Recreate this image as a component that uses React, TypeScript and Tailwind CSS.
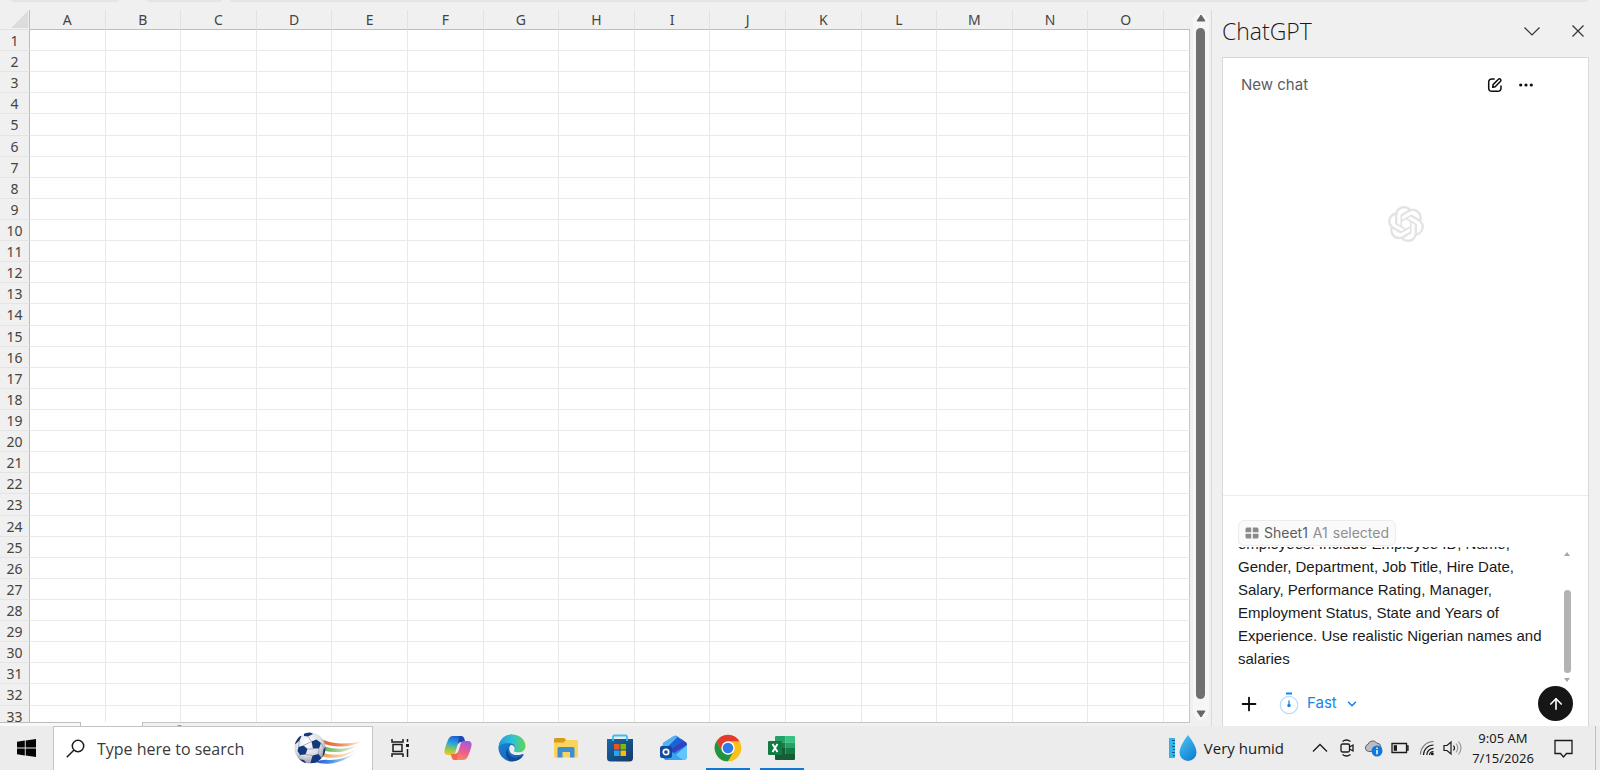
import {useEffect, useRef} from 'react';
import {SiOpenai} from 'react-icons/si';
import {ArrowUp, ChevronDown, Plus} from 'lucide-react';

const COLUMNS = 'ABCDEFGHIJKLMNO'.split('');
const ROWS = Array.from({length: 33}, (_, i) => i + 1);

const PROMPT =
	'employees. Include Employee ID, Name, Gender, Department, Job Title, Hire Date, Salary, Performance Rating, Manager, Employment Status, State and Years of Experience. Use realistic Nigerian names and salaries';

const Sheet = () => (
	<div className="flex-1 min-h-0 overflow-hidden">
		<table className="w-full h-[717px] table-fixed border-separate border-spacing-0 text-sm text-[#444]">
			<colgroup>
				<col className="w-[30px]" />
				{COLUMNS.map((c) => (
					<col key={c} />
				))}
				<col className="w-[26px]" />
			</colgroup>
			<thead>
				<tr className="h-5">
					<th className="h-5 p-0 border-b border-r border-b-[#e2e2e2] border-r-[#bdbdbd]">
						<svg className="ml-[11px] block" width="17" height="17" viewBox="0 0 17 17">
							<path d="M17 0v17H0z" fill="#dcdcdc" />
						</svg>
					</th>
					{COLUMNS.map((c) => (
						<th
							key={c}
							className="h-5 p-0 border-b border-r border-b-[#bdbdbd] border-r-[#e2e2e2] font-normal leading-[19px]"
						>
							{c}
						</th>
					))}
					<th className="h-5 p-0 border-b border-[#bdbdbd]" />
				</tr>
			</thead>
			<tbody>
				{ROWS.map((r) => (
					<tr key={r}>
						<th className="p-0 pt-[2px] border-r border-b border-r-[#bdbdbd] border-b-[#e4e4e4] font-normal leading-[18px]">
							{r}
						</th>
						{COLUMNS.map((c) => (
							<td key={c} className="p-0 bg-white border-r border-b border-[#e9e9e9]" />
						))}
						<td className="p-0 bg-white border-r border-b border-b-[#e9e9e9] border-r-[#c6c6c6]" />
					</tr>
				))}
			</tbody>
		</table>
	</div>
);

const SheetScrollbar = () => (
	<div className="w-[21px] flex flex-col items-center pt-1 pb-[2px]">
		<div className="w-4 flex-1 min-h-0 flex flex-col items-center rounded-lg bg-[#f6f6f6]">
			<svg className="block shrink-0" width="10" height="8" viewBox="0 0 10 8">
				<path d="M5 1l4 6H1z" fill="#666" stroke="#666" strokeLinejoin="round" />
			</svg>
			<div className="mt-[6px] mb-[11px] w-[9px] flex-1 rounded-full bg-[#707070]" />
			<svg className="block shrink-0 mb-[2px]" width="10" height="8" viewBox="0 0 10 8">
				<path d="M5 7l4-6H1z" fill="#666" stroke="#666" strokeLinejoin="round" />
			</svg>
		</div>
	</div>
);

const SheetTabs = () => (
	<div className="h-1 flex">
		<div className="w-[81px] bg-[#f8f8f8] border-t border-r border-[#bdbdbd]" />
		<div className="w-[62px] bg-white border-r border-[#bdbdbd]" />
		<div className="flex-1 mr-[21px] pl-8 bg-[#f1f1f1] border-t border-[#c6c6c6] overflow-hidden">
			<div className="mt-[2px] w-[9px] h-[9px] rounded-full border border-[#777]" />
		</div>
	</div>
);

const Composer = () => {
	const inputRef = useRef<HTMLTextAreaElement>(null);

	useEffect(() => {
		if (inputRef.current) {
			inputRef.current.scrollTop = inputRef.current.scrollHeight;
		}
	}, []);

	return (
		<div className="border-t border-[#ececec] pt-6 pb-[5px] pl-[15px] pr-[15px]">
			<div className="inline-flex h-[26px] items-center gap-[5px] rounded-md border border-[#ececec] bg-[#fafafa] px-[6px] text-sm text-[#8f8f8f] align-top">
				<svg width="14" height="12" viewBox="0 0 14 12" fill="#8a8a8a">
					<path d="M2 .5h4.2v4.8H.5V2A1.5 1.5 0 0 1 2 .5zM7.8.5H12A1.5 1.5 0 0 1 13.500 2v3.300H7.800zM.5 6.700h5.700v4.800H2A1.500 1.500 0 0 1 .5 10zM7.800 6.700h5.700V10A1.500 1.500 0 0 1 12 11.500H7.800z" />
				</svg>
				<span className="text-[#5d5d5d]">Sheet1</span>
				<span>A1</span>
				<span>selected</span>
			</div>
			<div className="mt-px flex h-[139px]">
				<textarea
					ref={inputRef}
					aria-label="Message"
					className="block h-[125px] flex-1 min-w-0 resize-none overflow-hidden bg-transparent pb-[2px] font-['Liberation_Sans',sans-serif] text-[15px] leading-[23px] text-[#1a1a1a] outline-none"
					defaultValue={PROMPT}
				/>
				<div className="w-3 flex flex-col items-center pt-1 pb-[3px]">
					<svg width="8" height="6" viewBox="0 0 8 6">
						<path d="M4 1l3 4H1z" fill="#a6a6a6" />
					</svg>
					<div className="mt-[33px] w-[7px] flex-1 rounded-full bg-[#b3b3b3]" />
					<svg className="mt-1" width="8" height="6" viewBox="0 0 8 6">
						<path d="M4 5l3-4H1z" fill="#a6a6a6" />
					</svg>
				</div>
			</div>
			<div className="flex items-center">
				<button aria-label="Add" className="text-[#0d0d0d]">
					<Plus size={22} strokeWidth={2} />
				</button>
				<button className="ml-[19px] flex items-center text-[15px] text-[#1285ee]">
					<svg width="20" height="24" viewBox="0 0 20 24" fill="none">
						<path d="M7 1.500h6" stroke="#1285ee" strokeWidth="2" />
						<circle cx="10" cy="13" r="8.700" stroke="#b5dcfb" strokeWidth="1.200" />
						<path d="M10 8.500V13" stroke="#1285ee" strokeWidth="1.300" />
						<circle cx="10" cy="13.500" r="1.700" fill="#1285ee" />
					</svg>
					<span className="ml-2">Fast</span>
					<ChevronDown className="ml-2" size={14} strokeWidth={2.6} />
				</button>
				<button
					aria-label="Send"
					className="ml-auto flex h-[35px] w-[35px] items-center justify-center rounded-full bg-[#161616] text-white"
				>
					<ArrowUp size={18} strokeWidth={2.2} />
				</button>
			</div>
		</div>
	);
};

const ChatPane = () => (
	<aside className="w-[388px] shrink-0 flex flex-col pl-[10px] pr-[11px]">
		<header className="h-[47px] flex items-center pb-[6px] pr-[5px]">
			<h1 className="font-['Open_Sans','Noto_Sans',sans-serif] text-[23px] font-light leading-[40px] text-[#1a1a1a]">
				ChatGPT
			</h1>
			<button aria-label="Pane options" className="ml-auto">
				<svg className="block" width="16" height="16" viewBox="0 0 16 16" fill="none" stroke="#333" strokeWidth="1.200">
					<path d="M.5 4.500l7.500 7.500 7.500-7.500" />
				</svg>
			</button>
			<button aria-label="Close pane" className="ml-8">
				<svg className="block" width="12" height="12" viewBox="0 0 12 12" fill="none" stroke="#333" strokeWidth="1.200">
					<path d="M.5.5l11 11M11.500.5l-11 11" />
				</svg>
			</button>
		</header>
		<section className="flex-1 min-h-0 flex flex-col border border-b-0 border-[#d8d8d8] bg-white font-['Inter',sans-serif]">
			<div className="h-[54px] flex items-center pl-[18px] pr-[54px]">
				<h2 className="text-[15px] text-[#5d5d5d]">New chat</h2>
				<button aria-label="New chat" className="ml-auto">
					<svg
						className="block"
						width="16"
						height="16"
						viewBox="0 0 16 16"
						fill="none"
						stroke="#0d0d0d"
						strokeWidth="1.500"
						strokeLinecap="round"
						strokeLinejoin="round"
					>
						<path d="M7.200 2H5Q1.700 2 1.700 5.200V11Q1.700 14.300 5 14.300h5.700q3.300 0 3.300-3.300V9" />
						<path d="M5.700 10.300l.4-2.700 5.300-5.400q1.100-1 2.100 0t0 2.100L8.200 9.800z" />
					</svg>
				</button>
				<button aria-label="More" className="ml-[15px]">
					<svg className="block" width="16" height="16" viewBox="0 0 16 16" fill="#0d0d0d">
						<circle cx="2.700" cy="8" r="1.600" />
						<circle cx="8" cy="8" r="1.600" />
						<circle cx="13.300" cy="8" r="1.600" />
					</svg>
				</button>
			</div>
			<div className="flex-1 flex justify-center pt-[94px]">
				<SiOpenai size={36} className="text-[#e3e3e3]" />
			</div>
			<Composer />
		</section>
	</aside>
);

const WindowsLogo = () => (
	<svg className="block" width="19" height="18" viewBox="0 0 19 18" fill="#050505">
		<path d="M0 2.800L7.800 1.600v7H0zM8.700 1.500L19 0v8.600H8.700zM0 9.400h7.800v7L0 15.200zM8.700 9.400H19V18L8.700 16.500z" />
	</svg>
);

const FootballArt = () => (
	<svg className="block" width="72" height="34" viewBox="0 0 72 34">
		<defs>
			<radialGradient id="ball" cx=".4" cy=".3" r=".75">
				<stop offset="0" stopColor="#fff" />
				<stop offset=".6" stopColor="#dcdde3" />
				<stop offset="1" stopColor="#8e8f9d" />
			</radialGradient>
			<linearGradient id="s1">
				<stop offset="0" stopColor="#e5532a" />
				<stop offset=".5" stopColor="#f08a5a" />
				<stop offset="1" stopColor="#fff" />
			</linearGradient>
			<linearGradient id="s2">
				<stop offset="0" stopColor="#5fae4c" />
				<stop offset="1" stopColor="#fff" />
			</linearGradient>
			<linearGradient id="s3">
				<stop offset="0" stopColor="#f0a04c" />
				<stop offset="1" stopColor="#fff" />
			</linearGradient>
			<linearGradient id="s4">
				<stop offset="0" stopColor="#2452c8" />
				<stop offset=".4" stopColor="#4c93e8" />
				<stop offset="1" stopColor="#fff" />
			</linearGradient>
			<clipPath id="ballClip">
				<circle cx="17" cy="16" r="15.500" />
			</clipPath>
		</defs>
		<path d="M26 6q10 5 22 5.500 12 0 22-2.500-11 5.500-22 5.500-12 0-20-4z" fill="url(#s1)" />
		<path d="M30 14q10 3.500 20 2.500 9-1 16-4-8 5.500-16 7-10 1.500-20-1z" fill="url(#s2)" />
		<path d="M30 21q11 3 20 1 9-2 16-7-7 7-16 9.500-10 2.500-21 0z" fill="url(#s3)" />
		<path d="M22 30q8-3 13-2 15 .5 29-8-13 10-26 11.500-9 1-16-1.500z" fill="url(#s4)" />
		<circle cx="17" cy="16" r="15.500" fill="url(#ball)" />
		<g clipPath="url(#ballClip)" fill="#12397c">
			<path d="M5.500 15l5-1.500 4 3.500-2 5.500-5.500.5-2.500-4z" />
			<path d="M18.500 9.500l5-2 4.500 3.500-2 5.500-6 0z" />
			<path d="M11 1l6-1 3 2-5 2.500-4-.5z" />
			<path d="M19.500 23.500l6-1.500 3 4-5 5h-6z" />
			<path d="M1 9l4-5.500 3.500.5-2 4.500-4.500 4z" />
			<path d="M30.500 17l3-3v8l-4 3z" />
			<path d="M5 27l6 1 3 4-6-1z" />
		</g>
		<g clipPath="url(#ballClip)" fill="none" stroke="#9a9ba8" strokeWidth=".8">
			<path d="M10.500 13.500l8-4M14.500 17h6M12.500 22.500l7 1M6.500 8.500l-1 6.500M26 16.500l-.5 5.500M18.500 9.500L15 4.500M7 23l-2 4M28 11l3 6" />
		</g>
	</svg>
);

const TaskViewIcon = () => (
	<svg className="block" width="18" height="18" viewBox="0 0 18 18" fill="none" stroke="#1a1a1a" strokeWidth="1.500">
		<path d="M1 0v3h11V0M1 18v-3h11v3M2 5.500h9v7H2zM16.500 0v3M16.500 10v8" />
		<path d="M15 5h3v3h-3z" fill="#1a1a1a" stroke="none" />
	</svg>
);

const CopilotIcon = () => (
	<svg width="28" height="28" viewBox="0 0 28 28">
		<defs>
			<linearGradient id="cp1" x1=".5" y1="0" x2=".3" y2="1">
				<stop offset="0" stopColor="#1b5fd0" />
				<stop offset=".4" stopColor="#2aa7dd" />
				<stop offset=".7" stopColor="#8cc653" />
				<stop offset="1" stopColor="#f3c62c" />
			</linearGradient>
			<linearGradient id="cp2" x1=".6" y1="0" x2=".3" y2="1">
				<stop offset="0" stopColor="#a45bd9" />
				<stop offset=".5" stopColor="#ec5a93" />
				<stop offset="1" stopColor="#fb8d55" />
			</linearGradient>
		</defs>
		<path d="M9 2h8q2.500 0 3.200 2.500L21 8h-4q-2.500 0-3.400 3l-2.500 8q-.9 2-3.100 2H4q-4 0-3.500-4.500Q1 13 4 6q1.500-4 5-4z" fill="url(#cp1)" />
		<path d="M15 2h2q2.500 0 3.200 2.500L21 8h-4q-2 0-3 2z" fill="#2345b0" />
		<path d="M19 26h-8q-2.500 0-3.200-2.500L7 20h4q2.500 0 3.400-3l2.500-8q.9-2 3.100-2h4q4 0 3.500 4.500Q27 15 24 22q-1.500 4-5 4z" fill="url(#cp2)" />
		<path d="M13 26h-2q-2.500 0-3.200-2.500L7 20h4q2 0 3-2z" fill="#f4694c" />
	</svg>
);

const EdgeIcon = () => (
	<svg width="28" height="28" viewBox="0 0 28 28">
		<defs>
			<linearGradient id="ed1" x1="0" y1=".4" x2="1" y2=".4">
				<stop offset="0" stopColor="#2298dc" />
				<stop offset=".5" stopColor="#2fc1d8" />
				<stop offset="1" stopColor="#62d64f" />
			</linearGradient>
			<linearGradient id="ed2" x1="0" y1="0" x2=".8" y2="1">
				<stop offset="0" stopColor="#1a86d9" />
				<stop offset="1" stopColor="#1464b8" />
			</linearGradient>
		</defs>
		<path d="M14 .5A13.500 13.500 0 1 0 25.500 21q.5-1.500-1-1-4 1.500-8 .5L20 10 14 .5z" fill="url(#ed2)" />
		<path d="M10 14c-1.500 6 3.500 10.500 9 9.500 2.500-.4 4.500-1.300 6.500-2.500-3 5-8 7-13 6C7.500 25.500 6.500 17.500 10 14z" fill="#134a92" />
		<path d="M.6 13C1.200 5.500 7 .5 14 .5c8 0 13.500 5.500 13.500 11.500 0 4-3 6.500-7 6.500-3.500 0-5-1.300-4-2.700 1.500-2 .7-5.800-3.500-6.300C7 8.600 2 9.500.6 13z" fill="url(#ed1)" />
		<path d="M13 11c3 0 4.500 2.500 3.500 4.800-1 1.400.5 2.700 4 2.700 1.500 0 3-.3 4-1l-1 2.500c-5 2-11 1-12-3.500-.5-1.500-.5-4.500 1.500-5.500z" fill="#ececec" />
	</svg>
);

const FolderIcon = () => (
	<svg width="24" height="28" viewBox="0 0 24 28">
		<path d="M1 4h9.500l1.500 2v4H0V5z" fill="#d99a1b" />
		<path d="M0 8.500h9.500L12 6h11q1 0 1 1v15.500q0 1-1 1H1q-1 0-1-1z" fill="#fbd35f" />
		<path d="M3.500 14.500Q3.500 13 5 13h14q1.500 0 1.500 1.500v9H16V18H8.500v5.500h-5z" fill="#3d8fd0" />
	</svg>
);

const StoreIcon = () => (
	<svg width="28" height="28" viewBox="0 0 28 28">
		<defs>
			<linearGradient id="st" x1="0" y1="0" x2="1" y2="1">
				<stop offset="0" stopColor="#1668ab" />
				<stop offset="1" stopColor="#173863" />
			</linearGradient>
		</defs>
		<path d="M1 5h26v19q0 3.500-3.500 3.500h-19Q1 27.500 1 24z" fill="url(#st)" />
		<path d="M7 7V3q0-1.500 1.500-1.500h11Q21 1.500 21 3v4" fill="none" stroke="#3cbdf0" strokeWidth="1.800" />
		<path d="M8 10h5.500v5.500H8z" fill="#f25022" />
		<path d="M14.500 10H20v5.500h-5.500z" fill="#7fba00" />
		<path d="M8 16.500h5.500V22H8z" fill="#22a6ee" />
		<path d="M14.500 16.500H20V22h-5.500z" fill="#ffb900" />
	</svg>
);

const OutlookIcon = () => (
	<svg width="28" height="28" viewBox="0 0 28 28">
		<path d="M3 9L14 2q1.500-.8 3 0l9 6.500q1 1 1 2.500v11q0 4-4 4H7q-4 0-4-4z" fill="#2b8be8" />
		<path d="M3 9L13 2.500q1.500-1 3.500 0l3 2L5 15l-3-1z" fill="#54b4f2" />
		<path d="M21 5l5 3.500q1 1 1 2.500L12 20l-4-3.500z" fill="#3440bd" />
		<path d="M17.500 3l5.500 4L8 17.500l-3-2z" fill="#1b63d4" />
		<path d="M27 11v11q0 4-4 4H10l9-8q5-4 8-7z" fill="#62c6fb" />
		<path d="M12 18l11 8H8z" fill="#3ba2f0" />
		<rect y="12" width="12" height="12" rx="2" fill="#124a9c" />
		<circle cx="6" cy="18" r="2.700" fill="none" stroke="#fff" strokeWidth="1.700" />
	</svg>
);

const ChromeIcon = () => (
	<svg width="28" height="28" viewBox="0 0 28 28">
		<circle cx="14" cy="14" r="13.300" fill="#fbc116" />
		<path d="M2.480 7.350A13.300 13.300 0 0 1 25.520 7.350H14L8.200 17.300z" fill="#e33b2e" />
		<path d="M2.480 7.350A13.300 13.300 0 0 0 14 27.300L19.800 17.300 8.200 17.300z" fill="#229342" />
		<circle cx="14" cy="14" r="6.700" fill="#fff" />
		<circle cx="14" cy="14" r="5.300" fill="#3079e8" />
	</svg>
);

const ExcelIcon = () => (
	<svg width="28" height="28" viewBox="0 0 28 28">
		<path d="M7 3q0-1 1-1h9.500v6.500H7z" fill="#21a366" />
		<path d="M17.500 2H26q1 0 1 1v5.500h-9.500z" fill="#33c481" />
		<path d="M7 8.500h10.500V14H7z" fill="#128048" />
		<path d="M17.500 8.500H27V14h-9.500z" fill="#21a366" />
		<path d="M7 14h10.500v6H7z" fill="#185c37" />
		<path d="M17.500 14H27v6h-9.500z" fill="#107c41" />
		<path d="M7 20h20v5q0 1-1 1H8q-1 0-1-1z" fill="#185c37" />
		<rect y="7" width="14" height="14" rx="1" fill="#107c41" />
		<path d="M4.500 10l5 8M9.500 10l-5 8" stroke="#fff" strokeWidth="1.900" />
	</svg>
);

const APPS = [
	{name: 'Copilot', Icon: CopilotIcon, open: false},
	{name: 'Edge', Icon: EdgeIcon, open: false},
	{name: 'File Explorer', Icon: FolderIcon, open: false},
	{name: 'Store', Icon: StoreIcon, open: false},
	{name: 'Outlook', Icon: OutlookIcon, open: false},
	{name: 'Chrome', Icon: ChromeIcon, open: true},
	{name: 'Excel', Icon: ExcelIcon, open: true},
];

const HumidityIcon = () => (
	<svg width="28" height="28" viewBox="0 0 28 28">
		<defs>
			<linearGradient id="drop" x1="0" y1="0" x2=".6" y2="1">
				<stop offset="0" stopColor="#4cc8f4" />
				<stop offset="1" stopColor="#1583d4" />
			</linearGradient>
		</defs>
		<path d="M0 4h6v20H0z" fill="#31b4ea" />
		<path d="M6 6.500H3M6 9.500H4M6 12.500H3M6 15.500H4M6 18.500H3M6 21.500H4" stroke="#0c5a94" strokeWidth="1.200" />
		<path d="M19 1q8.500 11 8.500 17.500a8.500 8.500 0 0 1-17 0Q10.500 12 19 1z" fill="url(#drop)" />
	</svg>
);

const TrayIcons = () => (
	<div className="flex items-center">
		<button aria-label="Show hidden icons">
			<svg className="block" width="16" height="16" viewBox="0 0 16 16" fill="none" stroke="#1a1a1a" strokeWidth="1.300">
				<path d="M1 11.500l7-7 7 7" />
			</svg>
		</button>
		<button aria-label="Meet now" className="ml-3">
			<svg className="block" width="14" height="18" viewBox="0 0 14 18" fill="none" stroke="#1a1a1a" strokeWidth="1.300">
				<rect x="1" y="5" width="8.500" height="8" rx="1.500" />
				<path d="M9.500 8l3.500-2v6l-3.500-2M2.500 2.500Q6.500-.5 10.500 2.500M2.500 15.500q4 3 8 0" />
			</svg>
		</button>
		<button aria-label="OneDrive" className="ml-[10px]">
			<svg className="block" width="19" height="18" viewBox="0 0 19 18">
				<path d="M4.500 12.500A3.700 3.700 0 0 1 4 5.300 5 5 0 0 1 12.800 4 4.500 4.500 0 0 1 17 8v4.500z" fill="#b9bcc0" stroke="#666" />
				<circle cx="13" cy="12" r="5.500" fill="#1177d8" />
				<path d="M13 11v4.200M13 8.500v1.500" stroke="#fff" strokeWidth="1.500" />
			</svg>
		</button>
		<button aria-label="Battery" className="ml-2">
			<svg className="block" width="18" height="12" viewBox="0 0 18 12" fill="none" stroke="#1a1a1a" strokeWidth="1.300">
				<path d="M1 1.500h14.500v9H1zM15.500 4H17v4h-1.500" />
				<path d="M2.700 3.200h3.300v5.600H2.700z" fill="#1a1a1a" stroke="none" />
			</svg>
		</button>
		<button aria-label="Network" className="ml-[10px]">
			<svg className="block" width="16" height="16" viewBox="0 0 16 16" fill="none" stroke="#1a1a1a" strokeWidth="1.200">
				<path d="M1.500 14.500A13 13 0 0 1 14.500 1.500" stroke="#777" />
				<path d="M4.500 15A10 10 0 0 1 14.500 5M7.800 15a6.700 6.700 0 0 1 6.700-6.700M10.500 15a4 4 0 0 1 4-3.500" />
				<circle cx="13.300" cy="13.800" r="1.500" fill="#1a1a1a" stroke="none" />
			</svg>
		</button>
		<button aria-label="Volume" className="ml-2">
			<svg className="block" width="20" height="16" viewBox="0 0 20 16" fill="none" stroke="#1a1a1a" strokeWidth="1.200">
				<path d="M1 5.500h3L8 2v12l-4-3.500H1z" />
				<path d="M10.500 5.500q2 2.500 0 5" />
				<path d="M13 3.500q3.500 4.500 0 9M15.500 1.500q5 6.500 0 13" stroke="#999" />
			</svg>
		</button>
	</div>
);

const Taskbar = () => (
	<footer className="h-11 shrink-0 flex bg-[#ececec]">
		<button aria-label="Start" className="w-[53px] flex items-center justify-center">
			<WindowsLogo />
		</button>
		<label className="w-[320px] flex items-center bg-white border border-b-0 border-[#c4c4c4] pl-3 pr-[7px]">
			<svg className="shrink-0" width="19" height="19" viewBox="0 0 19 19" fill="none" stroke="#1a1a1a" strokeWidth="1.500">
				<circle cx="12" cy="7" r="5.700" />
				<path d="M8 11L.8 18.200" />
			</svg>
			<input
				type="text"
				aria-label="Search"
				placeholder="Type here to search"
				className="ml-3 pt-px min-w-0 flex-1 bg-transparent font-['Open_Sans','Noto_Sans',sans-serif] text-base outline-none placeholder:text-[#3a3a3a]"
			/>
			<FootballArt />
		</label>
		<button aria-label="Task view" className="w-[54px] flex items-center justify-center">
			<TaskViewIcon />
		</button>
		<nav className="ml-[9px] flex gap-[10px]">
			{APPS.map(({name, Icon, open}) => (
				<button
					key={name}
					aria-label={name}
					className={
						open
							? 'w-[44px] pt-[2px] flex items-center justify-center border-b-2 border-[#1177d8]'
							: 'w-[44px] pt-[2px] flex items-center justify-center border-b-2 border-transparent'
					}
				>
					<Icon />
				</button>
			))}
		</nav>
		<div className="ml-auto flex items-center pr-1">
			<button className="flex items-center gap-[7px] font-['Open_Sans','Noto_Sans',sans-serif] text-[15px] text-[#1a1a1a]">
				<HumidityIcon />
				Very humid
			</button>
			<div className="ml-7">
				<TrayIcons />
			</div>
			<div className="w-20 text-center text-[13px] leading-5 text-[#1a1a1a]">
				<div>9:05 AM</div>
				<div>7/15/2026</div>
			</div>
			<button aria-label="Notifications" className="ml-[11px] mr-[22px]">
				<svg className="block" width="19" height="19" viewBox="0 0 19 19" fill="none" stroke="#1a1a1a" strokeWidth="1.300">
					<path d="M1 1.500h17v13h-5.500L9.500 18l-3-3.500H1z" />
				</svg>
			</button>
			<div className="h-11 w-px bg-[#c0c0c0]" />
		</div>
	</footer>
);

const App = () => (
	<div className="h-screen flex flex-col overflow-hidden bg-[#f0f0f0] font-['Noto_Sans','Open_Sans',sans-serif]">
		<div className="h-[2px] shrink-0 flex gap-2 pl-[11px] pr-3">
			<div className="w-[108px] mr-5 rounded-b bg-[#e5e5e5]" />
			<div className="w-[75px] rounded-b bg-[#e5e5e5]" />
			<div className="flex-1 rounded-b bg-[#e5e5e5]" />
		</div>
		<main className="flex-1 min-h-0 flex pt-2">
			<div className="flex-1 min-w-0 flex flex-col border-r border-[#dadada]">
				<div className="flex-1 min-h-0 flex">
					<Sheet />
					<SheetScrollbar />
				</div>
				<SheetTabs />
			</div>
			<ChatPane />
		</main>
		<Taskbar />
	</div>
);

export default App;
